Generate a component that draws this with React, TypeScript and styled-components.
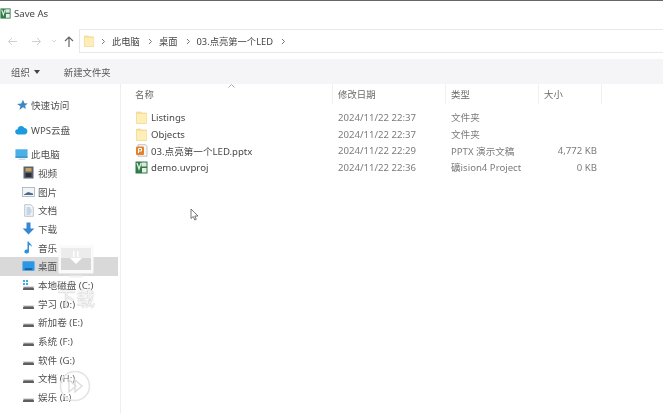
import React from "react";
import styled, { createGlobalStyle } from "styled-components";

const Global = createGlobalStyle`
  html, body { margin: 0; padding: 0; background: #fff; overflow: hidden; }
  #root { width: 663px; height: 413px; }
`;

const Win = styled.div`
  position: relative;
  width: 663px;
  height: 413px;
  overflow: hidden;
  background: #fff;
  border-top: 1px solid #666;
  box-sizing: border-box;
  font-family: "Noto Sans", "Noto Sans CJK SC", sans-serif;
  font-size: 9.6px;
  color: #555;
  filter: blur(0.45px);
`;
const TitleBar = styled.div`
  height: 28px;
  display: flex;
  align-items: center;
  gap: 3px;
  font-size: 9.6px;
  color: #444;
  box-sizing: border-box;
  padding-bottom: 3px;
`;
const NavRow = styled.div`
  height: 24px;
  display: flex;
  align-items: center;
`;
const NavButtons = styled.div`
  width: 79px;
  display: flex;
  align-items: center;
  padding-left: 7px;
  box-sizing: border-box;
  height: 100%;
`;
const NavIcon = styled.svg<{ $gap?: number }>`
  display: block;
  margin-right: ${(p) => p.$gap ?? 0}px;
  flex: none;
`;
const AddressBox = styled.div`
  flex: 1;
  height: 24px;
  box-sizing: border-box;
  border: 1px solid #e8e8e8;
  border-right: 0;
  display: flex;
  align-items: center;
  padding-left: 3px;
  gap: 6px;
  font-size: 9.3px;
  color: #444;
`;
const Crumb = styled.span`
  white-space: nowrap;
  margin-right: 2px;
`;
const Toolbar = styled.div`
  margin-top: 6px;
  height: 25px;
  background: #f5f5f7;
  display: flex;
  align-items: center;
  padding-left: 11px;
  color: #555;
  font-size: 9.4px;
`;
const ToolItem = styled.span`
  display: flex;
  align-items: center;
  gap: 4px;
  margin-right: 24px;
`;
const Main = styled.div`
  display: flex;
  height: 329px;
`;
const Sidebar = styled.div`
  width: 121px;
  flex: none;
  padding-top: 11.5px;
  box-sizing: border-box;
  border-right: 1px solid #eeeeee;
`;
const NavItem = styled.div<{ $level?: boolean; $sel?: boolean; $top?: number }>`
  height: 18.7px;
  width: 118px;
  display: flex;
  align-items: center;
  gap: 3px;
  box-sizing: border-box;
  margin-top: ${(p) => p.$top ?? 0}px;
  padding-left: ${(p) => (p.$level ? 22 : 15)}px;
  background: ${(p) => (p.$sel ? "#d9d9d9" : "transparent")};
  color: #505050;
  white-space: nowrap;
`;
const IconSlot = styled.span`
  width: 13px;
  height: 14px;
  flex: none;
  display: flex;
  align-items: center;
  justify-content: center;
`;
const Pane = styled.div`
  flex: 1;
`;
const Columns = styled.div`
  display: grid;
  grid-template-columns: 212px 113px 93px 63px;
`;
const Head = styled(Columns)`
  position: relative;
  height: 20px;
  align-items: stretch;
`;
const HeadCell = styled.div<{ $first?: boolean }>`
  display: flex;
  align-items: center;
  padding-left: ${(p) => (p.$first ? 14 : 5)}px;
  border-right: 1px solid #f0f0f0;
  color: #6a6a6a;
  font-size: 9.4px;
`;
const SortCaret = styled.svg`
  position: absolute;
  left: 107px;
  top: 0;
`;
const List = styled.div`
  padding-top: 5.2px;
`;
const Row = styled(Columns)`
  height: 16.6px;
  align-items: center;
  white-space: nowrap;
`;
const NameCell = styled.div`
  display: flex;
  align-items: center;
  gap: 3px;
  padding-left: 14px;
  color: #484848;
`;
const Cell = styled.div`
  padding-left: 5px;
  color: #7c7c7c;
`;
const SizeCell = styled.div`
  padding-right: 5px;
  text-align: right;
  color: #7c7c7c;
`;
const Pointer = styled.svg`
  position: absolute;
  left: 190px;
  top: 207px;
`;
const Watermark = styled.div`
  position: absolute;
  left: 57px;
  top: 244px;
  width: 38px;
  display: flex;
  flex-direction: column;
  align-items: center;
`;
const WatermarkText = styled.div`
  margin-top: 8px;
  font-size: 19px;
  line-height: 24px;
  color: rgba(255, 255, 255, 0.88);
  text-shadow: 0 0 1px rgba(120, 120, 120, 0.8);
  white-space: nowrap;
  font-family: "Noto Sans CJK SC", sans-serif;
`;
const PlayBadge = styled.svg`
  position: absolute;
  left: 59px;
  top: 369px;
`;

const Folder = ({ size = 13 }: { size?: number }) => (
  <svg width={size} height={size} viewBox="0 0 13 13">
    <path d="M1.5 1h4l1.5 1h4.5v10.5h-10z" fill="#fbe097" stroke="#ecd088" strokeWidth=".6" />
    <rect x="2" y="3" width="9.5" height="9" fill="#feeeb8" />
  </svg>
);
const Ppt = () => (
  <svg width="13" height="13" viewBox="0 0 13 13">
    <path d="M3 .7h7.5l1.5 1.5v10H3z" fill="#f8f8f8" stroke="#aaa" strokeWidth=".7" />
    <rect x="1" y="2.5" width="8" height="8.5" rx="1" fill="#e2812e" />
    <path d="M3.5 4.5h3v2.5h-3zM3.5 7v2" fill="none" stroke="#fff" strokeWidth="1" />
  </svg>
);
const Keil = ({ size = 13 }: { size?: number }) => (
  <svg width={size} height={size} viewBox="0 0 13 13">
    <rect x=".5" y=".5" width="12" height="12" fill="#2f7b4a" />
    <rect x="6.5" y="1.5" width="5" height="4" fill="#dfe8df" />
    <path d="M2 2l2 6 2-6" fill="none" stroke="#dff0df" strokeWidth="1.3" />
    <rect x="7" y="7" width="4.5" height="4.5" fill="#e9efe4" />
  </svg>
);
const Star = () => (
  <svg width="12" height="12" viewBox="0 0 12 12">
    <path d="M7 .8l1.4 3.4 3.3.3-2.6 2.2.8 3.4L7 8.3l-3.6 2.6 1-3.7L1 5l4.2-.6z" fill="#3f87c4" />
  </svg>
);
const Cloud = () => (
  <svg width="13" height="10" viewBox="0 0 13 10">
    <path d="M3 9.5a2.6 2.6 0 0 1-.4-5.2A3.6 3.6 0 0 1 9.4 3a3.3 3.3 0 0 1 .4 6.5z" fill="#1e9be0" />
  </svg>
);
const Pc = () => (
  <svg width="15" height="13" viewBox="0 0 15 13">
    <rect x=".5" y=".5" width="14" height="9.5" fill="#4bb0e8" />
    <rect x=".5" y="9" width="14" height="1.2" fill="#2c7cb5" />
    <rect x="4" y="11.3" width="8" height="1.2" fill="#b9cfe0" />
  </svg>
);
const Video = () => (
  <svg width="11" height="13" viewBox="0 0 11 13">
    <rect x=".5" y=".5" width="10" height="12" fill="#5a6272" />
    <rect x="2.5" y="2" width="6" height="3.5" fill="#c9a25a" />
    <rect x="2.5" y="7" width="6" height="4" fill="#2b3039" />
  </svg>
);
const Pic = () => (
  <svg width="13" height="10" viewBox="0 0 13 10">
    <rect x=".5" y=".5" width="12" height="9" fill="#f2f4f6" stroke="#9fb0bf" strokeWidth=".8" />
    <path d="M2 7.5l4-2.5 5 1.5v1.5H2z" fill="#4d6b88" />
  </svg>
);
const Doc = () => (
  <svg width="10" height="13" viewBox="0 0 10 13">
    <path d="M.7.7h6L9.3 3v9.3H.7z" fill="#f5f7f9" stroke="#a9b7c6" strokeWidth=".8" />
    <path d="M2.5 4h4M2.5 6h5M2.5 8h5M2.5 10h4" stroke="#7fa2c4" strokeWidth=".8" />
  </svg>
);
const Down = () => (
  <svg width="13" height="13" viewBox="0 0 13 13">
    <path d="M4.5 .5h4v6h3.8l-5.8 6-5.8-6h3.8z" fill="#3488d6" />
  </svg>
);
const Music = () => (
  <svg width="10" height="13" viewBox="0 0 10 13">
    <path d="M3.5 .5h1.3c.3 2 3.2 2.6 3.2 5.4-.8-1.2-2-1.7-3-1.8V10.500a2.300 2 0 1 1-1.500-1.900z" fill="#2f8fdc" />
  </svg>
);
const Desk = () => (
  <svg width="14" height="12" viewBox="0 0 14 12">
    <rect x=".5" y="1" width="13" height="10" rx=".8" fill="#2b97e6" />
    <rect x="3" y="8.700" width="8" height="1.200" fill="#123f66" />
  </svg>
);
const Drive = ({ win }: { win?: boolean }) => (
  <svg width="13" height="12" viewBox="0 0 13 12">
    {win && <path d="M1 1h2v2H1zM4 1h2v2H4zM1 4h2v2H1zM4 4h2v2H4z" fill="#39b0e6" />}
    <path d="M2 8h9l1 1.500V11H1V9.500z" fill="#5e5e5e" />
    <rect x="1" y="7.500" width="11" height="1" fill="#bdbdbd" />
  </svg>
);

const Chevron = ({ c = "#777" }: { c?: string }) => (
  <svg width="5" height="7" viewBox="0 0 5 7">
    <path d="M1 1l2.500 2.500L1 6" fill="none" stroke={c} strokeWidth="1" />
  </svg>
);

const nav: { label: string; icon: React.ReactNode; level?: boolean; sel?: boolean; top?: number }[] = [
  { label: "快速访问", icon: <Star /> },
  { label: "WPS云盘", icon: <Cloud />, top: 6 },
  { label: "此电脑", icon: <Pc />, top: 6 },
  { label: "视频", icon: <Video />, level: true },
  { label: "图片", icon: <Pic />, level: true },
  { label: "文档", icon: <Doc />, level: true },
  { label: "下载", icon: <Down />, level: true },
  { label: "音乐", icon: <Music />, level: true },
  { label: "桌面", icon: <Desk />, level: true, sel: true },
  { label: "本地磁盘 (C:)", icon: <Drive win />, level: true },
  { label: "学习 (D:)", icon: <Drive />, level: true },
  { label: "新加卷 (E:)", icon: <Drive />, level: true },
  { label: "系统 (F:)", icon: <Drive />, level: true },
  { label: "软件 (G:)", icon: <Drive />, level: true },
  { label: "文档 (H:)", icon: <Drive />, level: true },
  { label: "娱乐 (I:)", icon: <Drive />, level: true },
];

const files = [
  { name: "Listings", icon: <Folder />, date: "2024/11/22 22:37", type: "文件夹", size: "" },
  { name: "Objects", icon: <Folder />, date: "2024/11/22 22:37", type: "文件夹", size: "" },
  { name: "03.点亮第一个LED.pptx", icon: <Ppt />, date: "2024/11/22 22:29", type: "PPTX 演示文稿", size: "4,772 KB" },
  { name: "demo.uvproj", icon: <Keil />, date: "2024/11/22 22:36", type: "礦ision4 Project", size: "0 KB" },
];

export default function App() {
  return (
    <>
      <Global />
      <Win>
        <TitleBar>
          <Keil size={11} />
          <span>Save As</span>
        </TitleBar>
        <NavRow>
          <NavButtons>
            <NavIcon $gap={15} width="10" height="9" viewBox="0 0 10 9">
              <path d="M5 1L1.500 4.500 5 8M1.500 4.500H10" fill="none" stroke="#d0d0d0" strokeWidth="1" />
            </NavIcon>
            <NavIcon $gap={9} width="10" height="9" viewBox="0 0 10 9">
              <path d="M5 1l3.500 3.500L5 8M8.500 4.500H0" fill="none" stroke="#d0d0d0" strokeWidth="1" />
            </NavIcon>
            <NavIcon $gap={7} width="6" height="4" viewBox="0 0 6 4">
              <path d="M1 1l2 2 2-2" fill="none" stroke="#d5d5d5" strokeWidth="1" />
            </NavIcon>
            <NavIcon width="10" height="11" viewBox="0 0 10 11">
              <path d="M1 5l4-4 4 4M5 1v10" fill="none" stroke="#666" strokeWidth="1.200" />
            </NavIcon>
          </NavButtons>
          <AddressBox>
            <Folder size={12} />
            <Chevron />
            <Crumb>此电脑</Crumb>
            <Chevron />
            <Crumb>桌面</Crumb>
            <Chevron />
            <Crumb>03.点亮第一个LED</Crumb>
            <Chevron />
          </AddressBox>
        </NavRow>
        <Toolbar>
          <ToolItem>
            组织
            <svg width="6" height="4" viewBox="0 0 6 4">
              <path d="M0 0h6L3 4z" fill="#444" />
            </svg>
          </ToolItem>
          <ToolItem>新建文件夹</ToolItem>
        </Toolbar>
        <Main>
          <Sidebar>
            {nav.map((n) => (
              <NavItem key={n.label} $level={n.level} $sel={n.sel} $top={n.top}>
                <IconSlot>{n.icon}</IconSlot>
                <span>{n.label}</span>
              </NavItem>
            ))}
          </Sidebar>
          <Pane>
            <Head>
              <SortCaret width="7" height="4" viewBox="0 0 7 4">
                <path d="M.5 3.500l3-3 3 3" fill="none" stroke="#999" strokeWidth=".8" />
              </SortCaret>
              <HeadCell $first>名称</HeadCell>
              <HeadCell>修改日期</HeadCell>
              <HeadCell>类型</HeadCell>
              <HeadCell>大小</HeadCell>
            </Head>
            <List>
              {files.map((f) => (
                <Row key={f.name}>
                  <NameCell>
                    {f.icon}
                    <span>{f.name}</span>
                  </NameCell>
                  <Cell>{f.date}</Cell>
                  <Cell>{f.type}</Cell>
                  <SizeCell>{f.size}</SizeCell>
                </Row>
              ))}
            </List>
          </Pane>
        </Main>
        <Pointer width="9" height="13" viewBox="0 0 9 13">
          <path d="M1 1v9.500l2.300-2 1.500 3.500 1.500-.7-1.500-3.300H8z" fill="#fff" stroke="#555" strokeWidth=".8" />
        </Pointer>
        <Watermark>
          <svg width="36" height="33" viewBox="0 0 36 33">
            <rect x=".5" y=".5" width="35" height="28" rx="1" fill="#fafafa" />
            <rect x="3" y="3" width="30" height="22" fill="#ececec" />
            <rect x="3" y="13" width="30" height="12" fill="#d6d6d6" />
            <path d="M15 6h1.500v6H15zM19 6h1.500v6H19z" fill="#fff" />
            <path d="M12 13h12l-6 6z" fill="#fff" />
            <rect x="11" y="30.500" width="14" height="2" fill="#f2f2f2" />
          </svg>
          <WatermarkText>下载</WatermarkText>
        </Watermark>
        <PlayBadge width="32" height="32" viewBox="0 0 32 32">
          <circle cx="16" cy="16" r="14.500" fill="rgba(255,255,255,.18)" stroke="#e4e4e4" strokeWidth="1.600" />
          <path d="M10 10l7 6-7 6zM16 10l7 6-7 6z" fill="none" stroke="#dcdcdc" strokeWidth="1.400" />
        </PlayBadge>
      </Win>
    </>
  );
}
